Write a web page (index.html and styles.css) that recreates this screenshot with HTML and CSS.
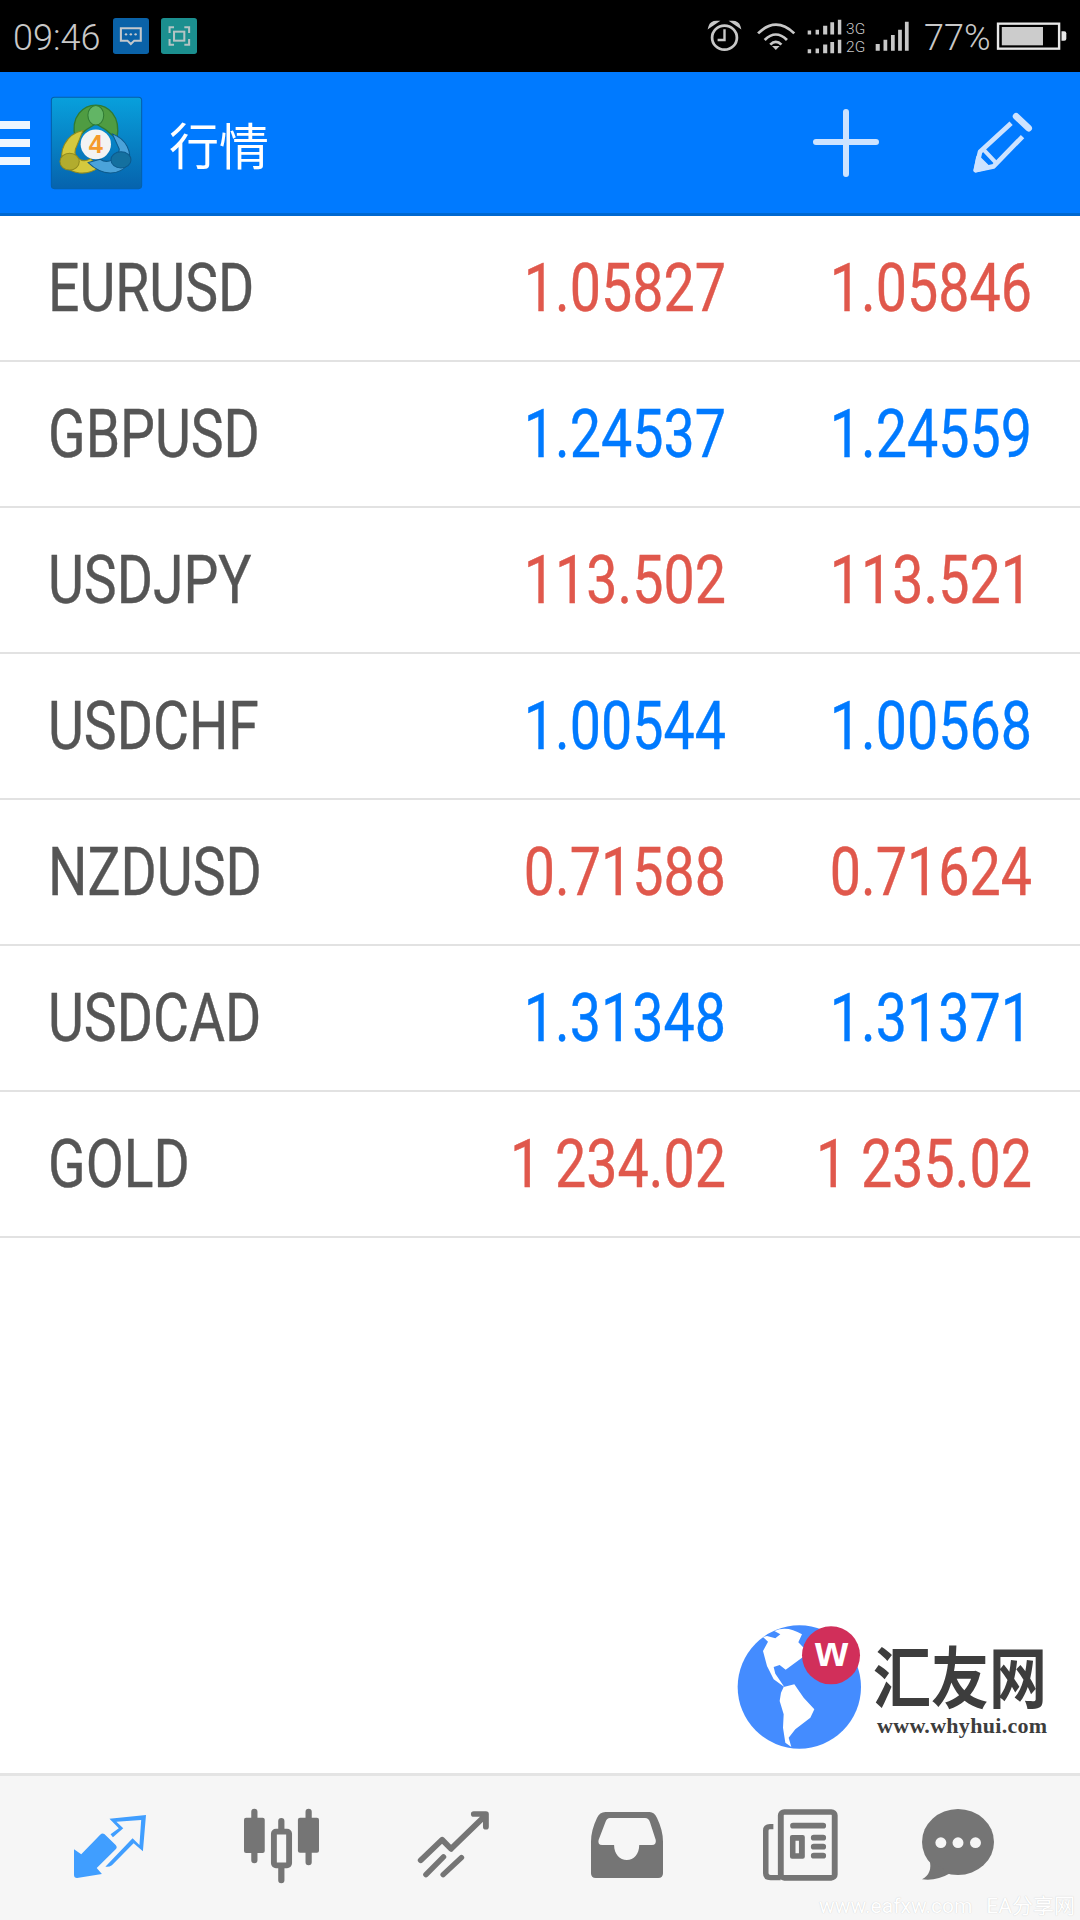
FILE: index.html
```html
<!DOCTYPE html>
<html lang="en">
<head>
    <meta charset="UTF-8">
    <title>行情</title>
    <link rel="stylesheet" href="styles.css">
</head>
<body>
    <div class="status-bar">
        <span class="clock">09:46</span>
        <svg class="note-icon" viewBox="328 57 105 108" preserveAspectRatio="none">
            <rect x="328" y="57" width="105" height="108" rx="8" fill="#0a62a8"/>
            <path d="M351 88H409V125H390L380 135L370 125H351Z" fill="none" stroke="#c4c8cc" stroke-width="6"/>
            <circle cx="366" cy="106" r="3.5" fill="#c4c8cc"/><circle cx="380" cy="106" r="3.5" fill="#c4c8cc"/><circle cx="394" cy="106" r="3.5" fill="#c4c8cc"/>
        </svg>
        <svg class="note-icon teal" viewBox="467 57 105 108" preserveAspectRatio="none">
            <rect x="467" y="57" width="105" height="108" rx="8" fill="#1b8f8f"/>
            <path d="M505 85H492V102M535 85H549V102M505 137H492V120M535 137H549V120" fill="none" stroke="#b4c4c4" stroke-width="6"/>
            <rect x="505" y="98" width="30" height="27" fill="none" stroke="#b4c4c4" stroke-width="6"/>
        </svg>
        <div class="status-right">
            <svg class="alarm" viewBox="490 62 90 96" preserveAspectRatio="none">
                <circle cx="535" cy="115" r="36" fill="none" stroke="#c8c8c8" stroke-width="8"/>
                <path d="M535 90V122H515" fill="none" stroke="#c8c8c8" stroke-width="7"/>
                <path d="M492 82Q496 68 512 68L492 82ZM578 82Q574 68 558 68L578 82Z" fill="none" stroke="#c8c8c8" stroke-width="7"/>
            </svg>
            <svg class="wifi" viewBox="625 66 115 90" preserveAspectRatio="none">
                <path d="M631 103Q682 51 735 103M650 123Q682 90 714 123M666 137Q682 120 698 137" fill="none" stroke="#c8c8c8" stroke-width="8"/>
                <path d="M671 141H693L682 153Z" fill="#c8c8c8"/>
            </svg>
            <svg class="network" viewBox="770 58 172 104" preserveAspectRatio="none">
                <path d="M772 92h10v12h-10zM795 90h10v14h-10zM817 78h12v26h-12zM838 68h11v36h-11zM860 60h10v44h-10zM772 148h10v12h-10zM795 146h10v14h-10zM817 134h12v26h-12zM838 126h11v34h-11zM860 120h10v40h-10z" fill="#c8c8c8"/>
                <text x="884" y="102" class="net-text">3G</text>
                <text x="884" y="156" class="net-text">2G</text>
            </svg>
            <svg class="bars" viewBox="970 66 100 90" preserveAspectRatio="none">
                <path d="M972 135h12v20h-12zM995 122h11v33h-11zM1017 108h11v47h-11zM1038 92h11v63h-11zM1058 68h11v87h-11z" fill="#c8c8c8"/>
            </svg>
            <span class="battery-text">77%</span>
            <svg class="battery" viewBox="1328 70 204 84" preserveAspectRatio="none">
                <rect x="1331" y="75" width="178" height="75" fill="none" stroke="#e8e8e8" stroke-width="7"/>
                <rect x="1342" y="85" width="120" height="55" fill="#cccccc"/>
                <path d="M1516 98h8q6 0 6 6v16q0 6-6 6h-8z" fill="#e8e8e8"/>
            </svg>
        </div>
    </div>

    <div class="header">
        <div class="hamburger"><span></span><span></span><span></span></div>
        <svg class="mt-logo" viewBox="147 296 264 272" preserveAspectRatio="none">
            <defs>
                <linearGradient id="tile" x1="0" y1="0" x2="0" y2="1">
                    <stop offset="0" stop-color="#08a0dc"/>
                    <stop offset="1" stop-color="#0663ad"/>
                </linearGradient>
            </defs>
            <rect x="148" y="297" width="262" height="270" rx="9" fill="url(#tile)" stroke="#0560a8" stroke-width="3"/>
            <path d="M218 420C200 350 245 320 277 320C310 320 352 350 338 420L305 392L277 375L250 392Z" fill="#4f9c42" stroke="#2f7a33" stroke-width="4"/>
            <ellipse cx="277" cy="350" rx="23" ry="29" fill="#62b565" stroke="#2f7a33" stroke-width="3"/>
            <path d="M240 395C190 405 165 460 186 495C205 525 250 530 285 505L262 478C235 495 205 470 222 440Z" fill="#d5c93e" stroke="#8f8a1e" stroke-width="3"/>
            <ellipse cx="201" cy="487" rx="28" ry="25" fill="#b2ac2e" stroke="#8f8a1e" stroke-width="3"/>
            <path d="M325 405C365 420 385 460 370 495C345 530 295 530 255 490L290 480C310 495 345 480 345 450Z" fill="#4ba3da" stroke="#0d5a8c" stroke-width="3"/>
            <ellipse cx="350" cy="482" rx="29" ry="24" fill="#14709f" stroke="#0d5a8c" stroke-width="3"/>
            <circle cx="277" cy="436" r="44" fill="#f3f3f3"/>
            <text x="277" y="463" class="mt-four">4</text>
        </svg>
        <div class="title">行情</div>
        <svg class="plus" viewBox="0 0 66 68">
            <path d="M33 3V65M3 33H63" fill="none" stroke="#cde3ff" stroke-width="6" stroke-linecap="round"/>
        </svg>
        <svg class="pencil" viewBox="1255 338 178 184" preserveAspectRatio="none">
            <path d="M1368 372L1276 458L1263 514L1316 502L1402 412" fill="none" stroke="#cde3ff" stroke-width="14" stroke-linejoin="round"/>
            <path d="M1285 450L1322 490M1263 514L1270 475L1300 505Z" fill="#cde3ff" stroke="#cde3ff" stroke-width="12" stroke-linejoin="round"/>
            <path d="M1383 351L1420 387" stroke="#cde3ff" stroke-width="20" stroke-linecap="round"/>
        </svg>
    </div>

    <div class="quote-list">
        <div class="quote-row">
            <div class="symbol">EURUSD</div>
            <div class="price bid down">1.05827</div>
            <div class="price ask down">1.05846</div>
        </div>
        <div class="quote-row">
            <div class="symbol">GBPUSD</div>
            <div class="price bid up">1.24537</div>
            <div class="price ask up">1.24559</div>
        </div>
        <div class="quote-row">
            <div class="symbol">USDJPY</div>
            <div class="price bid down">113.502</div>
            <div class="price ask down">113.521</div>
        </div>
        <div class="quote-row">
            <div class="symbol">USDCHF</div>
            <div class="price bid up">1.00544</div>
            <div class="price ask up">1.00568</div>
        </div>
        <div class="quote-row">
            <div class="symbol">NZDUSD</div>
            <div class="price bid down">0.71588</div>
            <div class="price ask down">0.71624</div>
        </div>
        <div class="quote-row">
            <div class="symbol">USDCAD</div>
            <div class="price bid up">1.31348</div>
            <div class="price ask up">1.31371</div>
        </div>
        <div class="quote-row">
            <div class="symbol">GOLD</div>
            <div class="price bid down">1 234.02</div>
            <div class="price ask down">1 235.02</div>
        </div>
    </div>

    <div class="site-logo">
        <svg class="globe" viewBox="50 72 372 372">
            <circle cx="237" cy="258" r="185" fill="#448cff"/>
            <path d="M162 90Q200 72 245 100L234 124L250 140L270 150L245 170L196 206L178 192L160 198L165 218L192 258L160 235L140 195L128 150L143 122L128 108L140 105L165 112L180 100Z" fill="#ffffff"/>
            <path d="M190 258L222 250L250 290L282 325L270 350L225 385L205 410L213 438L195 425L188 380L190 340L178 300L182 275Z" fill="#ffffff"/>
            <circle cx="332" cy="163" r="87" fill="#d12f5a"/>
            <text x="334" y="196" class="badge-w">w</text>
        </svg>
        <div class="site-name">
            <div class="site-cn">汇友网</div>
            <div class="site-url">www.whyhui.com</div>
        </div>
    </div>

    <div class="tab-bar">
        <svg class="tab-icon t1" viewBox="215 165 209 189" preserveAspectRatio="none">
            <path d="M215 268L236 283L291 224Q297 218 303 222L336 255Q342 262 336 268L281 324L296 342L224 354Q215 354 215 345Z" fill="#409eff"/>
            <path d="M318 176L424 165L415 274L388 250L325 316Q316 322 306 320L385 235L405 255L410 180L338 185L358 205L328 232L321 223L345 205Z" fill="#409eff"/>
        </svg>
        <svg class="tab-icon t2" viewBox="709 148 217 220" preserveAspectRatio="none">
            <path d="M739 156V300M896 156V306M817 184V360" stroke="#757575" stroke-width="18" stroke-linecap="round"/>
            <rect x="709" y="174" width="60" height="105" rx="6" fill="#757575"/>
            <rect x="865" y="174" width="61" height="104" rx="6" fill="#757575"/>
            <rect x="795.5" y="215.500" width="44" height="100" rx="6" fill="#f6f6f6" stroke="#757575" stroke-width="17"/>
        </svg>
        <svg class="tab-icon t3" viewBox="1214 155 206 200" preserveAspectRatio="none">
            <path d="M1222 302L1284 241L1310 268L1408 170M1376 164H1411V202" fill="none" stroke="#757575" stroke-width="17" stroke-linecap="round" stroke-linejoin="round"/>
            <path d="M1237 345L1288 292M1287 345L1340 294" fill="none" stroke="#757575" stroke-width="16" stroke-linecap="round"/>
        </svg>
        <svg class="tab-icon t4" viewBox="148 156 209 198" preserveAspectRatio="none">
            <path fill-rule="evenodd" d="M190 156H318Q332 156 340 175Q357 212 357 245V340Q357 354 343 354H162Q148 354 148 340V245Q148 212 165 175Q173 156 190 156ZM203 174Q194 174 190 186L170 240Q167 255 180 255H215C215 282 232 300 252 300C272 300 288 282 288 255H325Q338 255 336 240L319 186Q315 174 305 174Z" fill="#757575"/>
        </svg>
        <svg class="tab-icon t5" viewBox="648 147 217 216" preserveAspectRatio="none">
            <rect x="699.500" y="156" width="156" height="197.500" rx="10" fill="none" stroke="#757575" stroke-width="17"/>
            <path d="M678 200H668Q656 200 656 212V340Q656 353 670 353H699" fill="none" stroke="#757575" stroke-width="16"/>
            <path d="M735 197H822M795 233H822M795 260H822M795 287H822" stroke="#757575" stroke-width="17" stroke-linecap="round"/>
            <path fill-rule="evenodd" d="M732 225H763Q769 225 769 231V290Q769 296 763 296H732Q726 296 726 290V231Q726 225 732 225ZM742 242V280H752V242Z" fill="#757575"/>
        </svg>
        <svg class="tab-icon t6" viewBox="1108 147 210 216" preserveAspectRatio="none">
            <ellipse cx="1213" cy="246" rx="105" ry="99" fill="#757575"/>
            <path d="M1130 300Q1140 340 1108 358Q1150 364 1190 340Z" fill="#757575"/>
            <circle cx="1163" cy="248" r="16" fill="#f6f6f6"/><circle cx="1213" cy="248" r="16" fill="#f6f6f6"/><circle cx="1264" cy="248" r="16" fill="#f6f6f6"/>
        </svg>
        <div class="source-mark"><span>www.eafxw.com</span><span>EA分享网</span></div>
    </div>
</body>
</html>
```
FILE: styles.css
```css
* {
    margin: 0;
    padding: 0;
    box-sizing: border-box;
}

body {
    width: 1080px;
    height: 1920px;
    font-family: Roboto, "Noto Sans CJK SC", sans-serif;
    background: #ffffff;
    display: flex;
    flex-direction: column;
    position: relative;
    overflow: hidden;
}

svg {
    display: block;
    flex: none;
    overflow: visible;
}

.status-bar {
    height: 72px;
    background: #000000;
    display: flex;
    align-items: center;
    padding-left: 13px;
    color: #c8c8c8;
}

.clock {
    font-size: 36px;
    font-weight: 300;
    width: 100px;
    position: relative;
    top: 2px;
}

.note-icon {
    width: 36px;
    height: 36px;
    margin-right: 12px;
}

.status-right {
    margin-left: auto;
    display: flex;
    align-items: center;
    height: 100%;
}

.alarm {
    width: 31px;
    height: 32px;
}

.wifi {
    width: 40px;
    height: 30px;
    margin-left: 16px;
}

.network {
    width: 59px;
    height: 35px;
    margin-left: 11px;
}

.net-text {
    font-size: 45px;
    font-weight: 300;
    fill: #c8c8c8;
}

.bars {
    width: 34px;
    height: 30px;
    margin-left: 9px;
}

.battery-text {
    font-size: 36px;
    font-weight: 300;
    width: 66px;
    margin-left: 15px;
    position: relative;
    top: 2px;
}

.battery {
    width: 70px;
    height: 28px;
    margin-left: 7px;
    margin-right: 13px;
}

.header {
    height: 144px;
    background: #007aff;
    border-bottom: 3px solid #0068d0;
    display: flex;
    align-items: center;
}

.hamburger {
    width: 30px;
    display: flex;
    flex-direction: column;
    gap: 10px;
}

.hamburger span {
    display: block;
    height: 8px;
    background: #eef6ff;
}

.mt-logo {
    width: 91px;
    height: 92px;
    margin-left: 21px;
}

.mt-four {
    font-family: "Liberation Sans", sans-serif;
    font-size: 74px;
    font-weight: bold;
    fill: #f59a2c;
    text-anchor: middle;
}

.title {
    font-family: "Noto Sans CJK SC", sans-serif;
    font-size: 50px;
    font-weight: 400;
    color: #ffffff;
    margin-left: 27px;
    flex: 1;
}

.plus {
    width: 66px;
    height: 68px;
    margin-right: 94px;
}

.pencil {
    width: 60px;
    height: 61px;
    margin-right: 47px;
}

.quote-list {
    flex: 1;
}

.quote-row {
    height: 146px;
    border-bottom: 2px solid #e2e2e2;
    display: flex;
    align-items: center;
    padding-right: 48px;
    font-size: 67px;
    -webkit-text-stroke: 0.4px currentColor;
}

.symbol {
    flex: 1;
    padding-left: 48px;
    color: #555555;
    transform: scaleX(0.825);
    transform-origin: 48px 50%;
}

.price {
    flex: none;
    width: 300px;
    text-align: right;
    white-space: nowrap;
    transform: scaleX(0.83);
    transform-origin: 100% 50%;
}

.bid {
    margin-right: 6px;
}

.down {
    color: #e0584c;
}

.up {
    color: #007aff;
}

.site-logo {
    position: absolute;
    left: 737px;
    top: 1625px;
    display: flex;
}

.globe {
    width: 124px;
    height: 124px;
}

.badge-w {
    font-family: "Liberation Sans", sans-serif;
    font-size: 128px;
    font-weight: bold;
    fill: #ffffff;
    text-anchor: middle;
}

.site-name {
    margin-left: 12px;
    color: #3d3d3d;
}

.site-cn {
    font-family: "Noto Sans CJK SC", sans-serif;
    font-size: 58px;
    font-weight: bold;
    line-height: 58px;
    margin-top: 20px;
    white-space: nowrap;
    transform: scaleY(1.16);
}

.site-url {
    font-family: "Liberation Serif", serif;
    font-size: 22px;
    font-weight: bold;
    letter-spacing: 0.3px;
    line-height: 26px;
    margin-top: 10px;
    margin-left: 4px;
    white-space: nowrap;
}

.tab-bar {
    height: 147px;
    background: #f6f6f6;
    border-top: 3px solid #e4e4e4;
    display: grid;
    grid-template-columns: 172px 171px 173px 174px 172px 144px;
    padding-left: 24px;
    justify-items: center;
    position: relative;
}

.tab-icon {
    margin-top: 33px;
}

.t1 {
    width: 72px;
    height: 63px;
    margin-top: 39px;
}

.t2 {
    width: 75px;
    height: 74px;
}

.t3 {
    width: 71px;
    height: 67px;
    margin-top: 35px;
}

.t4 {
    width: 72px;
    height: 66px;
    margin-top: 36px;
}

.t5 {
    width: 75px;
    height: 72px;
}

.t6 {
    width: 72px;
    height: 72px;
}

.source-mark {
    position: absolute;
    left: 819px;
    top: 117px;
    width: 256px;
    display: flex;
    justify-content: space-between;
    font-size: 21px;
    line-height: 26px;
    color: #ffffff;
    text-shadow: 0 0 1px #c4c4c4;
    white-space: nowrap;
}
```
